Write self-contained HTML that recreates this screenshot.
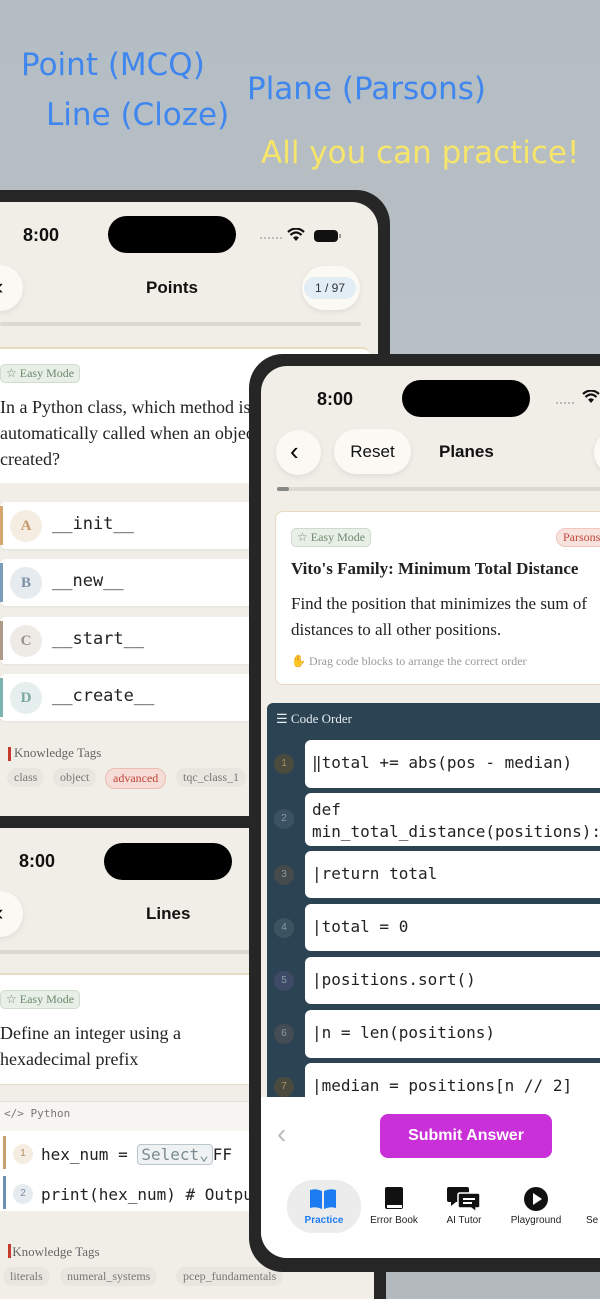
<!DOCTYPE html>
<html style="width:600px;height:1299px;overflow:hidden"><head><meta charset="utf-8"><style>
*{margin:0;padding:0;box-sizing:border-box}
body{width:600px;height:1299px;overflow:hidden;position:relative;background:linear-gradient(180deg,#b4bdc3 0%,#b9c1c6 40%,#b3b9bd 100%);font-family:"Liberation Sans",sans-serif}
.a{position:absolute}
.hl{font-family:"DejaVu Sans","Liberation Sans",sans-serif;font-size:31px;color:#3f86ef;white-space:nowrap}
.frame{position:absolute;background:#262626;border-radius:34px}
.scr{position:absolute;background:#f1eee8;border-radius:26px;overflow:hidden}
.time{position:absolute;font-size:18px;font-weight:bold;color:#111}
.island{position:absolute;width:128px;height:37px;background:#000;border-radius:19px}
.serif{font-family:"Liberation Serif",serif}
.mono{font-family:"DejaVu Sans Mono","Liberation Mono",monospace}
.badge{position:absolute;font-family:"Liberation Serif",serif;font-size:12px;color:#6f8a70;background:#e8efe6;border:1px solid #cfdccd;border-radius:5px;padding:1px 5px;white-space:nowrap}
.circ{position:absolute;background:#fbf9f3;border-radius:50%;box-shadow:0 2px 6px rgba(0,0,0,.08)}
.opt{position:absolute;left:0;width:260px;height:47px;background:#fff;border-radius:6px;box-shadow:0 1px 2px rgba(0,0,0,.06)}
.opt .bar{position:absolute;left:0;top:4px;bottom:4px;width:3px}
.opt .l{position:absolute;left:10px;top:8px;width:32px;height:32px;border-radius:50%;font-family:"Liberation Serif",serif;font-weight:bold;font-size:15px;text-align:center;line-height:32px}
.opt .t{position:absolute;left:52px;top:12px;font-size:17px;color:#222}
.tag{position:absolute;font-family:"Liberation Serif",serif;font-size:12px;color:#777;background:#e9e6e0;border-radius:10px;padding:2px 7px;white-space:nowrap}
.blk{position:absolute;left:305px;width:310px;background:#fff;border-radius:6px}
.blk span{position:absolute;left:7px;font-family:"DejaVu Sans Mono","Liberation Mono",monospace;font-size:16px;color:#222;white-space:nowrap}
.num{position:absolute;left:274px;width:20px;height:20px;border-radius:50%;font-size:10px;text-align:center;line-height:20px;color:#8a9aa5;background:#3b5262}
.tab{position:absolute;font-size:10px;color:#222;text-align:center}
</style></head><body>
<div class="a hl" style="left:21px;top:47px">Point (MCQ)</div>
<div class="a hl" style="left:46px;top:97px">Line (Cloze)</div>
<div class="a hl" style="left:247px;top:71px">Plane (Parsons)</div>
<div class="a hl" style="left:261px;top:135px;color:#f6e56a">All you can practice!</div>

<!-- phone 1 -->
<div class="frame" style="left:-40px;top:190px;width:430px;height:640px"></div>
<div class="scr" style="left:-30px;top:202px;width:408px;height:620px">
 <div style="position:absolute;left:30px;top:0;width:378px;height:620px">
  <div class="time" style="left:23px;top:23px">8:00</div>
  <div class="island" style="left:108px;top:14px"></div>
  <div class="a" style="left:260px;top:35px;width:22px;border-top:2px dotted #bbb"></div>
  <svg class="a" style="left:287px;top:26px" width="18" height="14" viewBox="0 0 18 14"><path d="M9 13 L6 9.5 Q9 7 12 9.5Z" fill="#111"/><path d="M3.5 7 Q9 2 14.5 7" stroke="#111" stroke-width="2.2" fill="none"/><path d="M1 4 Q9 -3 17 4" stroke="#111" stroke-width="2.2" fill="none"/></svg>
  <div class="a" style="left:314px;top:28px;width:24px;height:12px;background:#111;border-radius:4px"></div>
  <div class="a" style="left:339px;top:32px;width:2px;height:4px;background:#999"></div>
  <div class="circ" style="left:-23px;top:63px;width:46px;height:46px"></div>
  <div class="a" style="left:-4px;top:72px;font-size:22px">&#x2039;</div>
  <div class="a" style="left:146px;top:76px;font-size:17px;font-weight:bold;color:#111">Points</div>
  <div class="a" style="left:302px;top:64px;width:58px;height:44px;background:#fbf9f3;border-radius:22px;box-shadow:0 2px 6px rgba(0,0,0,.08)"></div>
  <div class="a" style="left:304px;top:75px;width:52px;height:22px;background:#e2edf5;border-radius:11px;font-size:12px;text-align:center;line-height:22px;color:#333">1 / 97</div>
  <div class="a" style="left:0;top:120px;width:361px;height:4px;background:#dcd9d3;border-radius:2px"></div>
  <div class="a" style="left:-10px;top:145px;width:380px;height:136px;background:#fff;border-radius:8px;border-top:2px solid #e8dcc0"></div>
  <div class="badge" style="left:0;top:162px">☆ Easy Mode</div>
  <div class="a serif" style="left:0;top:192px;font-size:18px;line-height:26px;color:#222;white-space:nowrap">In a Python class, which method is<br>automatically called when an object is<br>created?</div>
  <div class="opt" style="top:300px"><div class="bar" style="background:#d6a570"></div><div class="l" style="background:#f5ede2;color:#c49a6a">A</div><div class="t mono">__init__</div></div>
  <div class="opt" style="top:357px"><div class="bar" style="background:#7d9cbc"></div><div class="l" style="background:#e6ebf0;color:#7c8fa5">B</div><div class="t mono">__new__</div></div>
  <div class="opt" style="top:415px"><div class="bar" style="background:#ad9a86"></div><div class="l" style="background:#eeebe6;color:#9a9085">C</div><div class="t mono">__start__</div></div>
  <div class="opt" style="top:472px"><div class="bar" style="background:#7fb4ae"></div><div class="l" style="background:#e6efed;color:#7aa6a0">D</div><div class="t mono">__create__</div></div>
  <div class="a" style="left:8px;top:545px;width:3px;height:14px;background:#c53a2c"></div>
  <div class="a serif" style="left:14px;top:543px;font-size:13px;color:#666">Knowledge Tags</div>
  <div class="tag" style="left:7px;top:566px">class</div>
  <div class="tag" style="left:53px;top:566px">object</div>
  <div class="tag" style="left:105px;top:566px;background:#f5dcd6;color:#c0463a;border:1px solid #e9bdb4">advanced</div>
  <div class="tag" style="left:176px;top:566px">tqc_class_1</div>
 </div>
</div>

<!-- phone 2 -->
<div class="frame" style="left:-40px;top:816px;width:426px;height:483px;border-radius:34px 34px 0 0"></div>
<div class="scr" style="left:-30px;top:828px;width:404px;height:471px;border-radius:26px 26px 0 0">
 <div style="position:absolute;left:30px;top:0;width:374px;height:471px">
  <div class="time" style="left:19px;top:23px">8:00</div>
  <div class="island" style="left:104px;top:15px"></div>
  <div class="circ" style="left:-23px;top:63px;width:46px;height:46px"></div>
  <div class="a" style="left:-4px;top:72px;font-size:22px">&#x2039;</div>
  <div class="a" style="left:146px;top:76px;font-size:17px;font-weight:bold;color:#111">Lines</div>
  <div class="a" style="left:0;top:122px;width:374px;height:4px;background:#dcd9d3"></div>
  <div class="a" style="left:-10px;top:145px;width:384px;height:112px;background:#fff;border-top:2px solid #e8dcc0;border-bottom:1px solid #e8dcc0"></div>
  <div class="badge" style="left:0;top:162px">☆ Easy Mode</div>
  <div class="a serif" style="left:0;top:192px;font-size:18px;line-height:26px;color:#222;white-space:nowrap">Define an integer using a<br>hexadecimal prefix</div>
  <div class="a" style="left:-10px;top:273px;width:384px;height:100px;background:#f7f5f1;border-top:1px solid #e3e0da"></div>
  <div class="a mono" style="left:4px;top:279px;font-size:11px;color:#777">&lt;/&gt; Python</div>
  <div class="a" style="left:0;top:303px;width:374px;height:80px;background:#fff"></div>
  <div class="a" style="left:3px;top:308px;width:3px;height:33px;background:#c9a072"></div>
  <div class="a" style="left:3px;top:348px;width:3px;height:33px;background:#6f8fb3"></div>
  <div class="a" style="left:13px;top:316px;width:20px;height:20px;border-radius:50%;background:#f5ede2;font-size:10px;color:#b08a60;text-align:center;line-height:20px">1</div>
  <div class="a" style="left:13px;top:356px;width:20px;height:20px;border-radius:50%;background:#e6ebf0;font-size:10px;color:#7c8fa5;text-align:center;line-height:20px">2</div>
  <div class="a mono" style="left:41px;top:316px;font-size:16px;color:#222;white-space:nowrap">hex_num = <span style="display:inline-block;border:1px solid #b9c6cc;background:#eef2f3;border-radius:4px;padding:0 3px;color:#7a8a90">Select⌄</span>FF</div>
  <div class="a mono" style="left:41px;top:357px;font-size:16px;color:#222;white-space:nowrap">print(hex_num)  # Output</div>
  <div class="a" style="left:8px;top:416px;width:3px;height:14px;background:#c53a2c"></div>
  <div class="a serif" style="left:9px;top:416px;font-size:13px;color:#666">&nbsp;Knowledge Tags</div>
  <div class="tag" style="left:3px;top:439px">literals</div>
  <div class="tag" style="left:60px;top:439px">numeral_systems</div>
  <div class="tag" style="left:176px;top:439px">pcep_fundamentals</div>
 </div>
</div>

<!-- phone 3 -->
<div class="frame" style="left:249px;top:354px;width:400px;height:918px"></div>
<div class="scr" style="left:261px;top:366px;width:380px;height:892px">
 <div style="position:absolute;left:-261px;top:-366px;width:861px;height:1300px">
  <div class="time" style="left:317px;top:389px">8:00</div>
  <div class="island" style="left:402px;top:380px"></div>
  <div class="a" style="left:556px;top:402px;width:18px;border-top:2px dotted #bbb"></div>
  <svg class="a" style="left:582px;top:390px" width="18" height="14" viewBox="0 0 18 14"><path d="M9 13 L6 9.5 Q9 7 12 9.5Z" fill="#111"/><path d="M3.5 7 Q9 2 14.5 7" stroke="#111" stroke-width="2.2" fill="none"/><path d="M1 4 Q9 -3 17 4" stroke="#111" stroke-width="2.2" fill="none"/></svg>
  <div class="circ" style="left:276px;top:430px;width:45px;height:45px"></div>
  <div class="a" style="left:290px;top:436px;font-size:26px">&#x2039;</div>
  <div class="a" style="left:334px;top:429px;width:77px;height:45px;background:#fbf9f3;border-radius:23px;box-shadow:0 2px 6px rgba(0,0,0,.08);font-size:17px;text-align:center;line-height:45px;color:#111">Reset</div>
  <div class="a" style="left:439px;top:442px;font-size:17px;font-weight:bold;color:#111">Planes</div>
  <div class="circ" style="left:594px;top:430px;width:45px;height:45px"></div>
  <div class="a" style="left:277px;top:487px;width:330px;height:4px;background:#dcd9d3"></div>
  <div class="a" style="left:277px;top:487px;width:12px;height:4px;background:#888;border-radius:2px"></div>
  <div class="a" style="left:275px;top:511px;width:340px;height:174px;background:#fff;border:1px solid #e6d9bd;border-radius:8px"></div>
  <div class="badge" style="left:291px;top:528px">☆ Easy Mode</div>
  <div class="a serif" style="left:556px;top:528px;font-size:12px;color:#c0463a;background:#f8e2dd;border:1px solid #efc5bd;border-radius:10px;padding:1px 6px">Parsons</div>
  <div class="a serif" style="left:291px;top:559px;font-size:17px;font-weight:bold;color:#222;white-space:nowrap">Vito's Family: Minimum Total Distance</div>
  <div class="a serif" style="left:291px;top:591px;font-size:17px;line-height:26px;color:#222;white-space:nowrap">Find the position that minimizes the sum of<br>distances to all other positions.</div>
  <div class="a serif" style="left:291px;top:654px;font-size:12px;color:#999;white-space:nowrap"><span style="color:#6b3fa0">✋</span> Drag code blocks to arrange the correct order</div>
  <div class="a" style="left:267px;top:703px;width:350px;height:400px;background:#2c4353;border-radius:6px 6px 0 0"></div>
  <div class="a serif" style="left:276px;top:711px;font-size:13px;color:#e6ecef">☰ Code Order</div>
  <div class="blk" style="top:740px;height:48px"><span style="top:13px">‖total += abs(pos - median)</span></div>
  <div class="blk" style="top:793px;height:53px"><span style="top:6px;line-height:22px">def<br>min_total_distance(positions):</span></div>
  <div class="blk" style="top:851px;height:47px"><span style="top:13px">|return total</span></div>
  <div class="blk" style="top:904px;height:47px"><span style="top:13px">|total = 0</span></div>
  <div class="blk" style="top:957px;height:47px"><span style="top:13px">|positions.sort()</span></div>
  <div class="blk" style="top:1010px;height:48px"><span style="top:13px">|n = len(positions)</span></div>
  <div class="blk" style="top:1063px;height:48px"><span style="top:13px">|median = positions[n // 2]</span></div>
  <div class="num" style="top:754px;background:#4a4a3e;color:#b09060">1</div>
  <div class="num" style="top:809px">2</div>
  <div class="num" style="top:865px;background:#444b4a">3</div>
  <div class="num" style="top:918px;background:#3a5460">4</div>
  <div class="num" style="top:971px;background:#3e4a66">5</div>
  <div class="num" style="top:1024px;background:#444c55">6</div>
  <div class="num" style="top:1077px;background:#4a4a3e;color:#b09060">7</div>
  <div class="a" style="left:261px;top:1097px;width:380px;height:170px;background:#fff"></div>
  <div class="a" style="left:277px;top:1118px;font-size:28px;color:#bbb">&#x2039;</div>
  <div class="a" style="left:380px;top:1114px;width:172px;height:44px;background:#c930d8;border-radius:8px;color:#fff;font-size:16px;font-weight:bold;text-align:center;line-height:44px">Submit Answer</div>
  <div class="a" style="left:287px;top:1180px;width:74px;height:53px;background:#ececec;border-radius:26px"></div>
  <svg class="a" style="left:309px;top:1188px" width="28" height="22" viewBox="0 0 28 22"><path d="M1 2 Q7 0 13 3 V21 Q7 18 1 20Z M15 3 Q21 0 27 2 V20 Q21 18 15 21Z" fill="#1e7cf2"/></svg>
  <div class="tab" style="left:287px;top:1215px;width:74px;color:#1e7cf2;font-weight:bold">Practice</div>
  <svg class="a" style="left:384px;top:1186px" width="20" height="26" viewBox="0 0 20 26"><rect x="1" y="1" width="18" height="22" rx="2" fill="#111"/><rect x="3" y="19" width="15" height="3" fill="#fff"/></svg>
  <div class="tab" style="left:364px;top:1215px;width:60px">Error Book</div>
  <svg class="a" style="left:447px;top:1186px" width="34" height="26" viewBox="0 0 34 26"><path d="M2 1 H20 Q22 1 22 3 V14 Q22 16 20 16 H9 L4 20 V16 H2 Q0 16 0 14 V3 Q0 1 2 1Z" fill="#111"/><path d="M13 7 H31 Q33 7 33 9 V20 Q33 22 31 22 H29 V26 L24 22 H13 Q11 22 11 20 V9 Q11 7 13 7Z" fill="#111" stroke="#fff" stroke-width="1.5"/><rect x="16" y="12" width="12" height="2" fill="#fff"/><rect x="16" y="16" width="9" height="2" fill="#fff"/></svg>
  <div class="tab" style="left:434px;top:1215px;width:60px">AI Tutor</div>
  <svg class="a" style="left:524px;top:1187px" width="24" height="24" viewBox="0 0 24 24"><circle cx="12" cy="12" r="12" fill="#111"/><path d="M9 6 L18 12 L9 18Z" fill="#fff"/></svg>
  <div class="tab" style="left:506px;top:1215px;width:60px">Playground</div>
  <div class="tab" style="left:586px;top:1215px">Se</div>
 </div>
</div>
</body></html>
